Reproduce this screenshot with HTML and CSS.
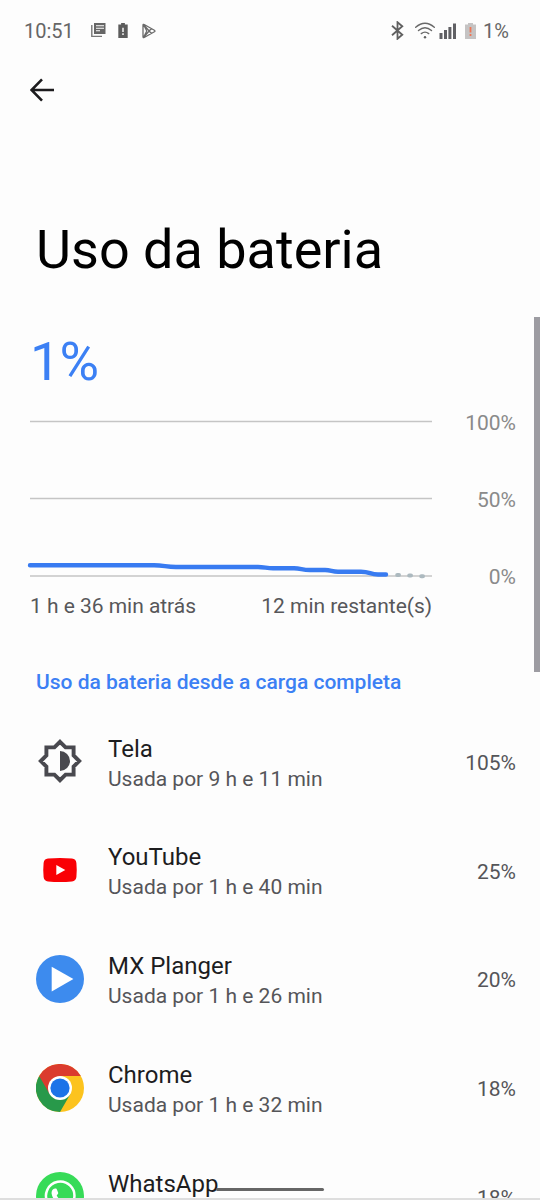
FILE: index.html
```html
<!DOCTYPE html>
<html lang="pt-BR">
<head>
<meta charset="utf-8">
<title>Uso da bateria</title>
<link rel="stylesheet" href="styles.css">
</head>
<body>
<div class="screen">
  <header class="status">
    <span class="clock">10:51</span>
    <svg class="news" width="15" height="15" viewBox="0 0 15 15"><path d="M3 0h11.5v11H3z" fill="#666"/><path d="M.8 2v11.4H11" fill="none" stroke="#777" stroke-width="1.4"/><path d="M5 2.7h8M5 5.2h8M5 7.8h4" stroke="#fff" stroke-width="1.1"/></svg>
    <svg class="alert" width="10" height="15" viewBox="0 0 10 16"><path d="M3 0h4v1.5h3V16H0V1.5h3z" fill="#5c5c5c"/><path d="M5 5v4.6M5 11v1.8" stroke="#fff" stroke-width="1.5"/></svg>
    <svg class="play" width="14" height="16" viewBox="0 0 14 16"><path d="M1 2.2v11.6q0 1.3 1.2.7l10.2-5.7q1.2-.8 0-1.6L2.2 1.5Q1 1 1 2.2zM1.6 1.8l7.8 8.7M1.6 14.2l7.8-8.7M1.6 1.8L4.8 8l-3.2 6.2" fill="none" stroke="#6a6a6a" stroke-width="1.3" stroke-linejoin="round"/></svg>
    <span class="spacer"></span>
    <svg class="bluetooth" width="13" height="19" viewBox="0 0 13 19"><path d="M1 4.8l10.3 9-4.8 4V1.2l4.8 4L1 14.2" fill="none" stroke="#606060" stroke-width="1.8"/></svg>
    <svg class="wifi" width="20" height="17" viewBox="0 0 20 17"><path d="M.7 5.2q9.3-8 18.6 0M3.5 8.5q6.5-5.4 13 0M6.3 11.6q3.7-3 7.4 0" fill="none" stroke="#696969" stroke-width="1.4" stroke-linecap="round"/><circle cx="10" cy="15.2" r="1.2" fill="#606060"/></svg>
    <svg class="signal" width="18" height="16" viewBox="0 0 18 16"><path d="M.5 10h3v6h-3zM5 7h3v9H5zM9.4 4h3v12h-3zM14 .5h3V16h-3z" fill="#606064"/></svg>
    <svg class="battery" width="11" height="16" viewBox="0 0 11 16"><path d="M3 0h5v1.5h3V16H0V1.5h3z" fill="#c5c3c3"/><path d="M5.5 4v5.5M5.5 11v2" stroke="#ee7555" stroke-width="1.8"/></svg>
    <span class="level">1%</span>
  </header>
  <nav class="back">
    <svg width="24" height="24" viewBox="0 0 24 24"><path d="M24 12H2M12 1.3L1.5 12 12 22.7" fill="none" stroke="#1c1b1d" stroke-width="2.6"/></svg>
  </nav>
  <h1 class="title">Uso da bateria</h1>
  <div class="current">1%</div>
  <section class="usage">
    <div class="graph">
      <svg class="plot" width="408" height="170" viewBox="0 0 408 170">
        <path d="M6 11.5h402M6 88.5h402M6 166h402" stroke="#c5c5c5" stroke-width="1.5"/>
        <path d="M6 155.3H130C140 155.3 142 157 152 157H234C240 157 243 158.3 249 158.3H270C277 158.3 278 160 286 160H301C307 160 308 161.7 314 161.7H337C346 161.7 346 164.5 354 164.5H362" fill="none" stroke="#387bf1" stroke-width="4.4" stroke-linecap="round"/>
        <path d="M373.2 165h1.8M385.2 165.6h1.8M397.2 166.2h1.8" stroke="#acb9bf" stroke-width="4" stroke-linecap="round"/>
      </svg>
      <div class="times"><span class="ago">1 h e 36 min atrás</span><span class="left">12 min restante(s)</span></div>
    </div>
    <div class="scale"><span>100%</span><span>50%</span><span>0%</span></div>
  </section>
  <h2 class="since">Uso da bateria desde a carga completa</h2>
  <ul class="apps">
    <li class="app">
      <svg class="icon" viewBox="0 0 48 48"><path d="M24 4.8l5.6 5.6h8v8l5.6 5.6-5.6 5.6v8h-8L24 43.2l-5.6-5.6h-8v-8L4.8 24l5.6-5.6v-8h8z" fill="none" stroke="#49494f" stroke-width="3.9"/><path d="M24 14a10 10 0 0 1 0 20z" fill="#49494f"/></svg>
      <div class="info"><div class="name">Tela</div><div class="detail">Usada por 9 h e 11 min</div></div><span class="share">105%</span>
    </li>
    <li class="app">
      <svg class="icon" viewBox="0 0 48 48"><path d="M12 12.6q12-1.2 24 0 4 .4 4.4 4.4.7 7 0 14-.4 4-4.4 4.4-12 1.2-24 0-4-.4-4.4-4.4-.7-7 0-14 .4-4 4.4-4.4z" fill="#f90005"/><path d="M20.3 19v10l9-5z" fill="#fff"/></svg>
      <div class="info"><div class="name">YouTube</div><div class="detail">Usada por 1 h e 40 min</div></div><span class="share">25%</span>
    </li>
    <li class="app">
      <svg class="icon" viewBox="0 0 48 48"><circle cx="24" cy="24" r="24" fill="#3d8bee"/><path d="M15.7 11.8v24.6L37.4 24z" fill="#fff"/></svg>
      <div class="info"><div class="name">MX Planger</div><div class="detail">Usada por 1 h e 26 min</div></div><span class="share">20%</span>
    </li>
    <li class="app">
      <svg class="icon" viewBox="0 0 48 48"><circle cx="24" cy="24" r="24" fill="#fcc31e"/><path d="M3.2 12A24 24 0 0 0 24 48L34.4 30 24 24z" fill="#28994a"/><path d="M3.2 12A24 24 0 0 1 44.8 12H24v12l-10.4 6z" fill="#db3b2e"/><circle cx="24" cy="24" r="12" fill="#fff"/><circle cx="24" cy="24" r="9.6" fill="#1c73e8"/></svg>
      <div class="info"><div class="name">Chrome</div><div class="detail">Usada por 1 h e 32 min</div></div><span class="share">18%</span>
    </li>
    <li class="app">
      <svg class="icon" viewBox="0 0 48 48"><circle cx="24" cy="24" r="24" fill="#37db58"/><path d="M10 38l2-7a14.2 14.2 0 1 1 5 5z" fill="none" stroke="#fff" stroke-width="2.5"/><path d="M19 16.5c1.2-.2 1.6.2 2 1.2l1.2 3c.4 1-.8 1.8-1.5 2.7 1.3 2.5 3 4 5.6 5.2l2.2-2.2 4.6 2.4c-.3 3.4-3 4.8-6.2 4-6.3-1.6-10.6-6.1-11.3-11.2-.3-2 .8-5 3.4-5.1z" fill="#fff"/></svg>
      <div class="info"><div class="name">WhatsApp</div><div class="detail"></div></div><span class="share">18%</span>
    </li>
  </ul>
  <div class="scrollbar"></div>
  <div class="gesture"></div>
  <div class="edge"></div>
</div>
</body>
</html>
```
FILE: styles.css
```css
* { box-sizing: border-box; }
body { margin: 0; font-family: Roboto, sans-serif; background: #fdfdfd; }
.screen { position: relative; width: 540px; height: 1200px; overflow: hidden; background: #fdfdfd; }
svg { display: block; flex: none; }

.status { display: flex; align-items: center; height: 61px; padding: 0 31px 0 24px; color: #666; font-size: 20px; }
.clock { width: 50px; white-space: nowrap; }
.news { margin-left: 16.5px; }
.alert { margin-left: 12.5px; }
.play { margin-left: 14px; }
.spacer { flex: 1; }
.wifi { margin-left: 11px; }
.signal { margin-left: 4px; }
.battery { margin-left: 8px; }
.level { width: 26px; margin-left: 7px; white-space: nowrap; }

.back { height: 148px; padding: 17px 30px; }
.title { height: 82px; margin: 0; padding-left: 36px; font-size: 54px; font-weight: 400; line-height: 81px; color: #000; white-space: nowrap; }
.current { height: 119px; padding-left: 30px; font-size: 54px; line-height: 141px; letter-spacing: -.8px; color: #3c80f4; }

.usage { display: flex; justify-content: space-between; height: 240px; padding: 0 24px; }
.graph { width: 408px; }
.times { display: flex; justify-content: space-between; padding-left: 6px; font-size: 21px; line-height: 52px; letter-spacing: -.03px; color: #57575a; white-space: nowrap; }
.scale { display: flex; flex-direction: column; text-align: right; font-size: 21px; line-height: 77.3px; color: #8a8a8a; margin-top: -25.4px; }

.since { height: 64px; margin: 0; padding-left: 36px; font-size: 21px; font-weight: 500; line-height: 64px; color: #3c80f4; white-space: nowrap; }
.apps { margin: -7px 0 0; padding: 0; list-style: none; }
.app { display: flex; align-items: center; height: 108.75px; padding: 0 24px 0 36px; }
.icon { width: 48px; height: 48px; }
.info { flex: 1; margin-left: 24px; padding-top: 4.6px; white-space: nowrap; }
.name { font-size: 24px; line-height: 30px; color: #1d1d1f; }
.detail { min-height: 30px; font-size: 21px; line-height: 30px; color: #555559; }
.share { padding-top: 3px; font-size: 21px; color: #555559; }

.scrollbar { position: absolute; top: 317px; right: 0; width: 6px; height: 355px; background: #9d9ca2; }
.gesture { position: absolute; left: 216px; bottom: 9px; width: 108px; height: 3px; border-radius: 2px; background: #666; }
.edge { position: absolute; left: 0; right: 0; bottom: 0; height: 2px; background: #dedede; }
```
